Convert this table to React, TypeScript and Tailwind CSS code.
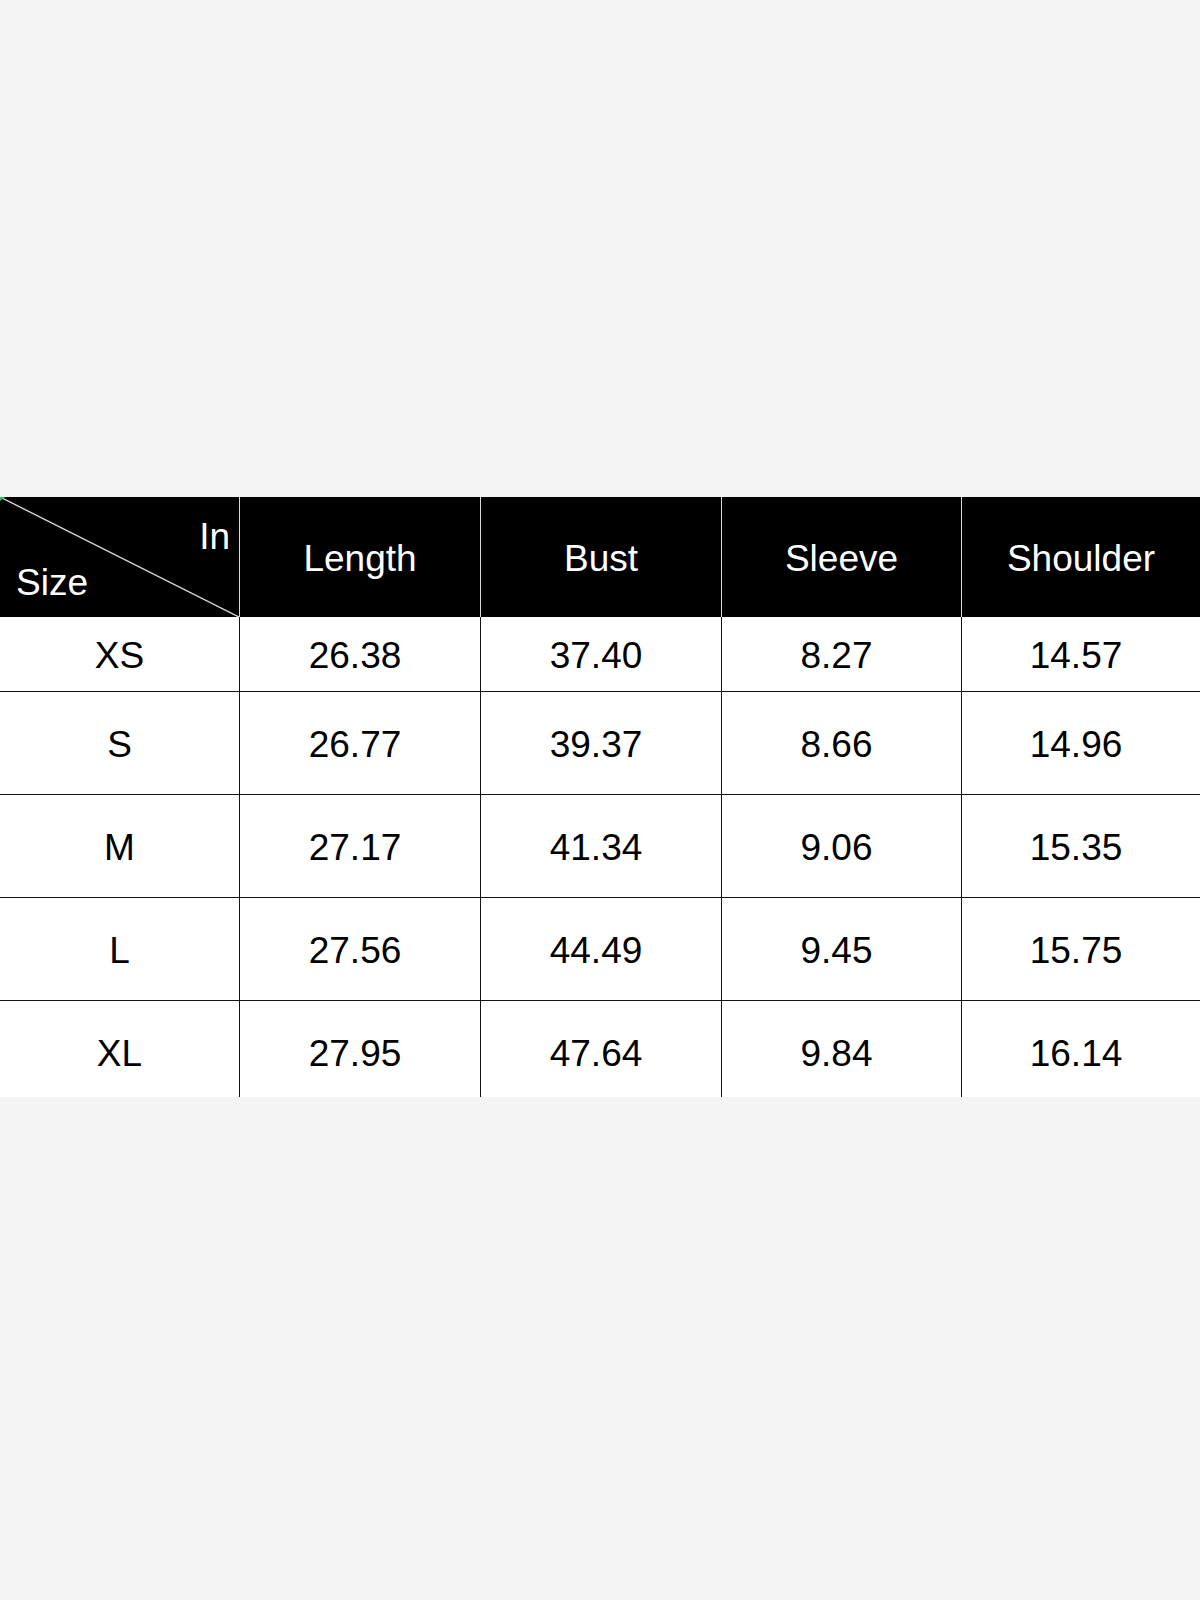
const rows = [
  { size: "XS", length: "26.38", bust: "37.40", sleeve: "8.27", shoulder: "14.57", h: "h-[74px] pt-[2px]" },
  { size: "S", length: "26.77", bust: "39.37", sleeve: "8.66", shoulder: "14.96", h: "h-[102px] pt-[3px]" },
  { size: "M", length: "27.17", bust: "41.34", sleeve: "9.06", shoulder: "15.35", h: "h-[102px] pt-[2px]" },
  { size: "L", length: "27.56", bust: "44.49", sleeve: "9.45", shoulder: "15.75", h: "h-[102px] pt-[2px]" },
  { size: "XL", length: "27.95", bust: "47.64", sleeve: "9.84", shoulder: "16.14", h: "h-[96px] pt-[8px]" },
];

const headers = ["Length", "Bust", "Sleeve", "Shoulder"];

const App = () => {
  return (
    <div
      className="w-[1200px] h-[1600px] bg-[#f4f4f4] pt-[497px]"
      style={{ fontFamily: '"Liberation Sans", Arial, sans-serif' }}
    >
      {/* Header */}
      <div className="grid grid-cols-[239px_241px_241px_240px_1fr] h-[120px] bg-black text-white text-[37px] leading-none">
        <div className="relative flex flex-col justify-between pt-[21px] pb-[16px]">
          <svg className="absolute inset-0" width="239" height="120" viewBox="0 0 239 120">
            <line x1="0" y1="0" x2="239" y2="120" stroke="#d4d4d4" strokeWidth="1.4" />
            <polygon points="0,0 5,0 0,4" fill="#22c55e" />
          </svg>
          <span className="relative self-end pr-[9px]">In</span>
          <span className="relative self-start pl-[16px]">Size</span>
        </div>
        {headers.map((h) => (
          <div key={h} className="flex items-center justify-center border-l border-[#d8d8d8] pt-[2px]">
            {h}
          </div>
        ))}
      </div>

      {/* Body */}
      <div className="bg-white text-black text-[37px] leading-none">
        {rows.map((r, i) => (
          <div
            key={r.size}
            className={`grid grid-cols-[239px_241px_241px_240px_1fr] ${i > 0 ? "border-t border-[#111]" : ""}`}
          >
            <div className={`flex items-center justify-center ${r.h}`}>{r.size}</div>
            {[r.length, r.bust, r.sleeve, r.shoulder].map((v, j) => (
              <div key={j} className={`flex items-center justify-center border-l border-[#111] pr-[10px] ${r.h}`}>
                {v}
              </div>
            ))}
          </div>
        ))}
      </div>
    </div>
  );
};

export default App;
